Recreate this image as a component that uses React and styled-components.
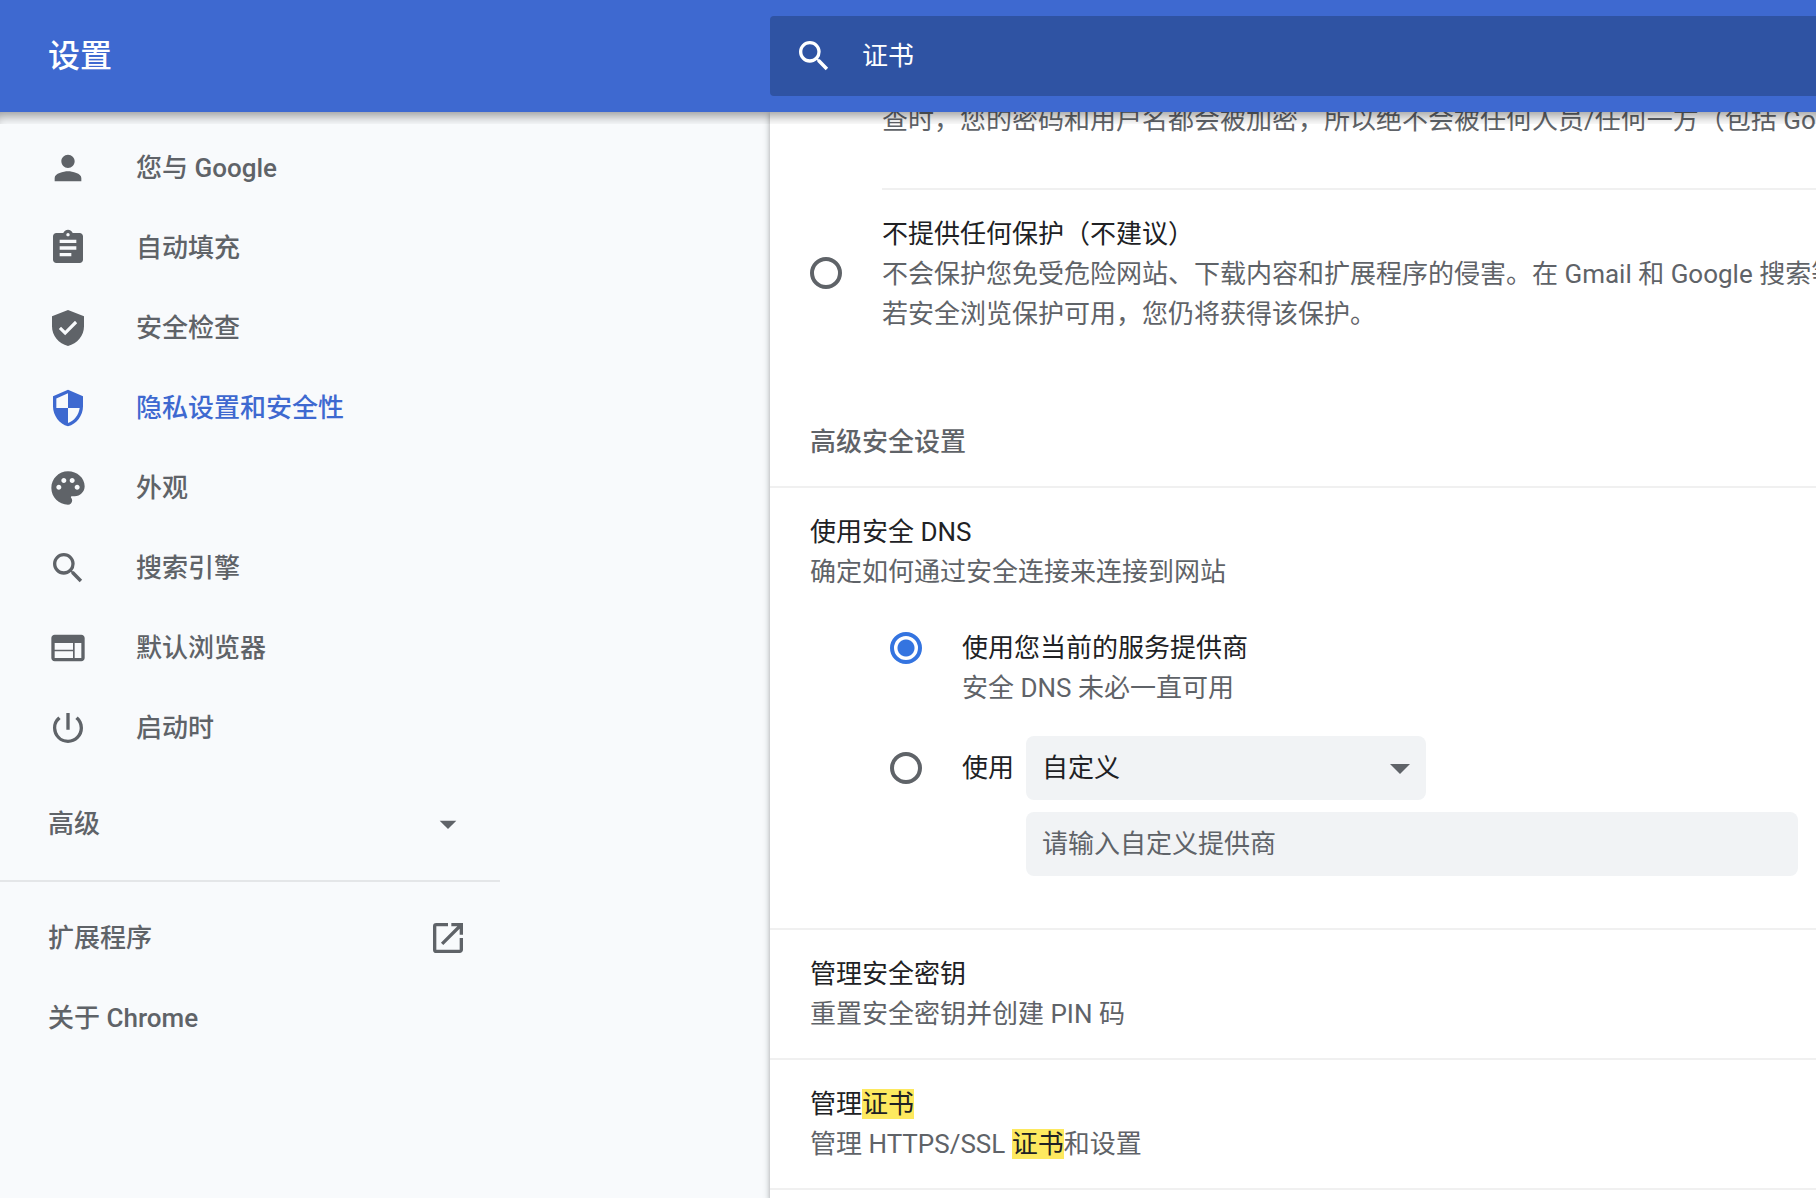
import React, { useState } from 'react';
import styled, { createGlobalStyle } from 'styled-components';
import {
  MdPerson,
  MdAssignment,
  MdSecurity,
  MdPalette,
  MdSearch,
  MdWeb,
  MdPowerSettingsNew,
  MdArrowDropDown,
  MdOpenInNew,
} from 'react-icons/md';

const GlobalStyle = createGlobalStyle`
  * {
    box-sizing: border-box;
  }

  body {
    margin: 0;
    background: #f8fafc;
    color: #202124;
    font-family: Roboto, 'Noto Sans CJK SC', sans-serif;
    font-size: 26px;
    line-height: 40px;
  }

  input, select, button {
    font: inherit;
  }
`;

const Page = styled.div`
  display: flex;
  flex-direction: column;
  height: 100vh;
  overflow: hidden;
`;

const Toolbar = styled.header`
  display: flex;
  align-items: center;
  flex: none;
  height: 112px;
  background: #3e69d0;
  color: #fff;
`;

const Title = styled.h1`
  flex: 0 0 770px;
  margin: 0;
  padding-left: 48px;
  font-size: 32px;
  font-weight: 500;
`;

const SearchBox = styled.label`
  display: flex;
  align-items: center;
  flex: 1;
  height: 80px;
  padding-left: 24px;
  gap: 28px;
  border-radius: 4px 0 0 4px;
  background: #2f53a3;

  svg {
    flex: none;
    width: 40px;
    height: 40px;
  }

  input {
    flex: 1;
    min-width: 0;
    padding: 0;
    border: 0;
    outline: none;
    background: none;
    color: #fff;
  }
`;

const Body = styled.div`
  position: relative;
  display: flex;
  flex: 1;
  min-height: 0;

  /* shadow that the toolbar drops on the scrolled content */
  &::before {
    content: '';
    position: absolute;
    top: 0;
    left: 0;
    right: 0;
    z-index: 2;
    height: 12px;
    box-shadow: inset 0 10px 12px -6px rgba(0, 0, 0, 0.4);
    pointer-events: none;
  }
`;

const Sidebar = styled.nav`
  flex: 0 0 770px;
  padding-top: 16px;
  overflow: hidden;
`;

const MenuItem = styled.a`
  display: flex;
  align-items: center;
  gap: 48px;
  width: 500px;
  height: 80px;
  padding-left: 48px;
  color: ${({ $active }) => ($active ? '#3e69d0' : '#5f6368')};
  font-weight: 500;
  text-decoration: none;

  svg {
    flex: none;
    width: 40px;
    height: 40px;
  }
`;

const WideItem = styled(MenuItem)`
  justify-content: space-between;
  padding-right: 32px;
`;

const AdvancedButton = styled(WideItem)`
  margin: 16px 0;
  padding-top: 0;
  padding-bottom: 0;
  border: 0;
  background: none;
  cursor: pointer;
`;

const Separator = styled.hr`
  width: 500px;
  height: 2px;
  margin: 0 0 16px;
  border: 0;
  background: #e4e6e8;
`;

const Card = styled.main`
  flex: 1;
  min-width: 0;
  background: #fff;
  box-shadow:
    0 2px 4px rgba(60, 64, 67, 0.3),
    0 2px 6px 2px rgba(60, 64, 67, 0.15);
  clip-path: inset(0 0 0 -12px);
  white-space: nowrap;
`;

const Primary = styled.div`
  color: #202124;
`;

const Secondary = styled.div`
  color: #5f6368;
`;

// Last line of the option above, mostly scrolled under the toolbar
const ScrolledOption = styled.div`
  margin: -12px 0 0 112px;
  padding-bottom: 48px;
`;

const ProtectionOption = styled.label`
  display: flex;
  align-items: center;
  gap: 40px;
  margin-left: 40px;
`;

const OptionText = styled.div`
  flex: 1;
  min-width: 0;
`;

const ProtectionText = styled(OptionText)`
  padding: 24px 0;
  border-top: 2px solid #f0f0f0;
`;

const Radio = styled.input`
  appearance: none;
  flex: none;
  width: 32px;
  height: 32px;
  margin: 0;
  border: 4px solid #5f6368;
  border-radius: 50%;

  &:checked {
    border-color: #3474e0;
    background: radial-gradient(circle, #3474e0 8px, transparent 9px);
  }
`;

const SectionTitle = styled.h2`
  margin: 0;
  padding: 64px 40px 24px;
  color: #5f6368;
  font-size: 26px;
  font-weight: 500;
`;

const Row = styled.section`
  padding: 24px 40px;
  border-top: 2px solid #f0f0f0;
`;

const DnsOptions = styled.div`
  padding: 36px 0 28px 80px;
`;

const DnsOption = styled.label`
  display: flex;
  align-items: flex-start;
  gap: 40px;

  ${Radio} {
    margin-top: 4px;
  }
`;

const CustomOption = styled.div`
  display: grid;
  grid-template-columns: auto 400px 1fr;
  align-items: center;
  row-gap: 12px;
  margin-top: 28px;
`;

const CustomLabel = styled.label`
  display: flex;
  align-items: center;
  gap: 40px;
  padding-right: 12px;
`;

const SelectBox = styled.div`
  position: relative;

  svg {
    position: absolute;
    top: 8px;
    right: 2px;
    width: 48px;
    height: 48px;
    color: #5f6368;
    pointer-events: none;
  }
`;

const Select = styled.select`
  appearance: none;
  width: 100%;
  height: 64px;
  padding: 0 16px;
  border: 0;
  border-radius: 8px;
  background: #f1f3f5;
  color: #202124;
`;

const ProviderInput = styled.input`
  grid-column: 2 / -1;
  height: 64px;
  margin-right: -22px;
  padding: 0 16px;
  border: 0;
  border-radius: 8px;
  background: #f1f3f5;

  &::placeholder {
    color: #5f6368;
    opacity: 1;
  }
`;

const Hit = styled.mark`
  background: #fde95f;
  color: #202124;
`;

const ShieldCheck = () => (
  <svg viewBox="0 0 24 24" fill="currentColor" aria-hidden="true">
    <path d="M12 1.2 2.4 5v6c0 5.5 4 10.5 9.6 11.8 5.6-1.3 9.6-6.3 9.6-11.8V5L12 1.2zm-1.7 15.2-3.8-3.8 1.3-1.4 2.5 2.5 5.9-6 1.3 1.4-7.2 7.3z" />
  </svg>
);

const menu = [
  { id: 'people', label: '您与 Google', icon: MdPerson },
  { id: 'autofill', label: '自动填充', icon: MdAssignment },
  { id: 'safetyCheck', label: '安全检查', icon: ShieldCheck },
  { id: 'privacy', label: '隐私设置和安全性', icon: MdSecurity },
  { id: 'appearance', label: '外观', icon: MdPalette },
  { id: 'search', label: '搜索引擎', icon: MdSearch },
  { id: 'defaultBrowser', label: '默认浏览器', icon: MdWeb },
  { id: 'onStartup', label: '启动时', icon: MdPowerSettingsNew },
];

const App = () => {
  const [query, setQuery] = useState('证书');
  const [provider, setProvider] = useState('');
  const [dnsMode, setDnsMode] = useState('current');

  return (
    <>
      <GlobalStyle />
      <Page>
        <Toolbar>
          <Title>设置</Title>
          <SearchBox>
            <MdSearch />
            <input type="text" aria-label="在设置中搜索" value={query} onChange={(e) => setQuery(e.target.value)} />
          </SearchBox>
        </Toolbar>
        <Body>
          <Sidebar>
            {menu.map(({ id, label, icon: Icon }) => (
              <MenuItem key={id} href={`#${id}`} $active={id === 'privacy'}>
                <Icon />
                {label}
              </MenuItem>
            ))}
            <AdvancedButton as="button" type="button">
              高级
              <MdArrowDropDown />
            </AdvancedButton>
            <Separator />
            <WideItem href="#extensions">
              扩展程序
              <MdOpenInNew />
            </WideItem>
            <WideItem href="#about">关于 Chrome</WideItem>
          </Sidebar>
          <Card>
            <ScrolledOption>
              <Secondary>查时，您的密码和用户名都会被加密，所以绝不会被任何人员/任何一方（包括 Google</Secondary>
            </ScrolledOption>
            <ProtectionOption>
              <Radio type="radio" name="protection" />
              <ProtectionText>
                <Primary>不提供任何保护（不建议）</Primary>
                <Secondary>不会保护您免受危险网站、下载内容和扩展程序的侵害。在 Gmail 和 Google 搜索等</Secondary>
                <Secondary>若安全浏览保护可用，您仍将获得该保护。</Secondary>
              </ProtectionText>
            </ProtectionOption>

            <SectionTitle>高级安全设置</SectionTitle>
            <Row>
              <Primary>使用安全 DNS</Primary>
              <Secondary>确定如何通过安全连接来连接到网站</Secondary>
              <DnsOptions>
                <DnsOption>
                  <Radio type="radio" name="dns" checked={dnsMode === 'current'} onChange={() => setDnsMode('current')} />
                  <OptionText>
                    <Primary>使用您当前的服务提供商</Primary>
                    <Secondary>安全 DNS 未必一直可用</Secondary>
                  </OptionText>
                </DnsOption>
                <CustomOption>
                  <CustomLabel>
                    <Radio type="radio" name="dns" checked={dnsMode === 'custom'} onChange={() => setDnsMode('custom')} />
                    使用
                  </CustomLabel>
                  <SelectBox>
                    <Select aria-label="服务提供商">
                      <option>自定义</option>
                    </Select>
                    <MdArrowDropDown />
                  </SelectBox>
                  <ProviderInput
                    type="text"
                    aria-label="自定义提供商"
                    placeholder="请输入自定义提供商"
                    value={provider}
                    onChange={(e) => setProvider(e.target.value)}
                  />
                </CustomOption>
              </DnsOptions>
            </Row>
            <Row>
              <Primary>管理安全密钥</Primary>
              <Secondary>重置安全密钥并创建 PIN 码</Secondary>
            </Row>
            <Row>
              <Primary>
                管理<Hit>证书</Hit>
              </Primary>
              <Secondary>
                管理 HTTPS/SSL <Hit>证书</Hit>和设置
              </Secondary>
            </Row>
            <Row />
          </Card>
        </Body>
      </Page>
    </>
  );
};

export default App;
